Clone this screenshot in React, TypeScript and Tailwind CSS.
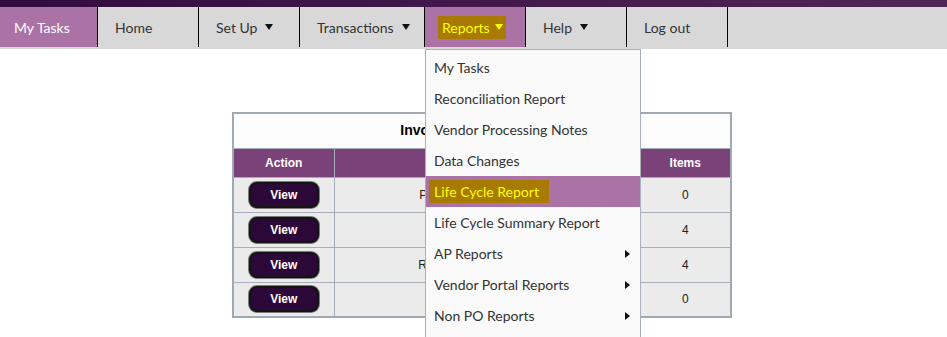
import React from 'react';

const navFont = { fontFamily: 'Lato, "Open Sans", sans-serif' };
const tableFont = { fontFamily: '"Liberation Sans", Arial, sans-serif' };

function DownArrow({ className = '' }: { className?: string }) {
  return (
    <svg width="8" height="6" viewBox="0 0 8 6" className={className}>
      <path d="M0 0 L8 0 L4 6 Z" fill="currentColor" />
    </svg>
  );
}

function RightArrow() {
  return (
    <svg width="5" height="8" viewBox="0 0 5 8">
      <path d="M0 0 L5 4 L0 8 Z" fill="#111" />
    </svg>
  );
}

const menuItems = [
  { label: 'My Tasks' },
  { label: 'Reconciliation Report' },
  { label: 'Vendor Processing Notes' },
  { label: 'Data Changes' },
  { label: 'Life Cycle Report', active: true },
  { label: 'Life Cycle Summary Report' },
  { label: 'AP Reports', sub: true },
  { label: 'Vendor Portal Reports', sub: true },
  { label: 'Non PO Reports', sub: true },
];

const rows = [
  { name: 'Pending Invoice Approval', items: 0 },
  { name: 'Invoices On Hold', items: 4 },
  { name: 'Rejected Invoices Review', items: 4 },
  { name: 'Duplicate Invoices', items: 0 },
];

function ReportsMenu() {
  return (
    <div className="w-[216px] border border-[#a9b0bb] bg-[#fafafa] pb-[20px] pt-[2px]">
      {menuItems.map((item) => (
        <div
          key={item.label}
          className={
            item.active
              ? 'flex h-[31px] items-center justify-between bg-[#ab72a6] pl-[3px] pr-[10px]'
              : 'flex h-[31px] items-center justify-between pl-[8px] pr-[10px] text-[#333]'
          }
        >
          {item.active ? (
            <span className="bg-[#a87a00] px-[5px] py-[1px] pr-[10px] text-[#ffff00]">{item.label}</span>
          ) : (
            <span>{item.label}</span>
          )}
          {item.sub && <RightArrow />}
        </div>
      ))}
    </div>
  );
}

export default function App() {
  return (
    <div className="relative min-h-[337px] overflow-hidden bg-white" style={navFont}>
      <div className="h-[7px] bg-gradient-to-r from-[#320b3f] to-[#522557]" />

      <nav className="flex h-[42px] bg-[#d8d8d8] pb-[2px] text-[14px] text-[#333]">
        <div className="flex w-[98px] items-center border-r border-black bg-[#ab72a6] pl-[14px] text-white">My Tasks</div>
        <div className="flex w-[101px] items-center border-r border-black pl-[17px]">Home</div>
        <div className="flex w-[101px] items-center border-r border-black pl-[17px]">
          Set Up
          <DownArrow className="ml-[8px] text-[#111]" />
        </div>
        <div className="flex w-[125px] items-center border-r border-black pl-[17px]">
          Transactions
          <DownArrow className="ml-[8px] text-[#111]" />
        </div>
        <div className="relative flex w-[101px] items-center border-r border-black bg-[#ab72a6] pl-[13px]">
          <span className="flex items-center bg-[#a87a00] py-[1px] pl-[4px] pr-[3px] text-[#ffff00]">
            Reports
            <DownArrow className="ml-[5px]" />
          </span>
          <div className="absolute left-0 top-[42px] z-10">
            <ReportsMenu />
          </div>
        </div>
        <div className="flex w-[101px] items-center border-r border-black pl-[17px]">
          Help
          <DownArrow className="ml-[8px] text-[#111]" />
        </div>
        <div className="flex w-[101px] items-center border-r border-black pl-[17px]">Log out</div>
      </nav>

      <div className="ml-[232px] mt-[63px]" style={tableFont}>
        <table className="w-[500px] border-collapse border-2 border-[#a0a8b3] text-[12px]">
          <thead>
            <tr>
              <th colSpan={3} className="h-[35px] border border-[#a6aeb9] bg-[#fcfcfc] text-[14px] font-bold text-black">
                Invoice Queue Summary
              </th>
            </tr>
            <tr className="bg-[#7b4279] text-white">
              <th className="h-[29px] w-[101px] border border-[#a6aeb9] font-bold">Action</th>
              <th className="border border-[#a6aeb9] font-bold">Queue</th>
              <th className="w-[91px] border border-[#a6aeb9] font-bold">Items</th>
            </tr>
          </thead>
          <tbody>
            {rows.map((row) => (
              <tr key={row.name} className="bg-[#ebebeb] text-[#222]">
                <td className="h-[35px] border border-[#a6aeb9] text-center">
                  <button className="h-[26px] w-[70px] rounded-[8px] border-2 border-[#141414] bg-[#2c0838] font-bold text-white shadow-[0_0_0_1px_#7a7a7a]">
                    View
                  </button>
                </td>
                <td className="border border-[#a6aeb9] text-center">{row.name}</td>
                <td className="border border-[#a6aeb9] text-center">{row.items}</td>
              </tr>
            ))}
          </tbody>
        </table>
      </div>
    </div>
  );
}
